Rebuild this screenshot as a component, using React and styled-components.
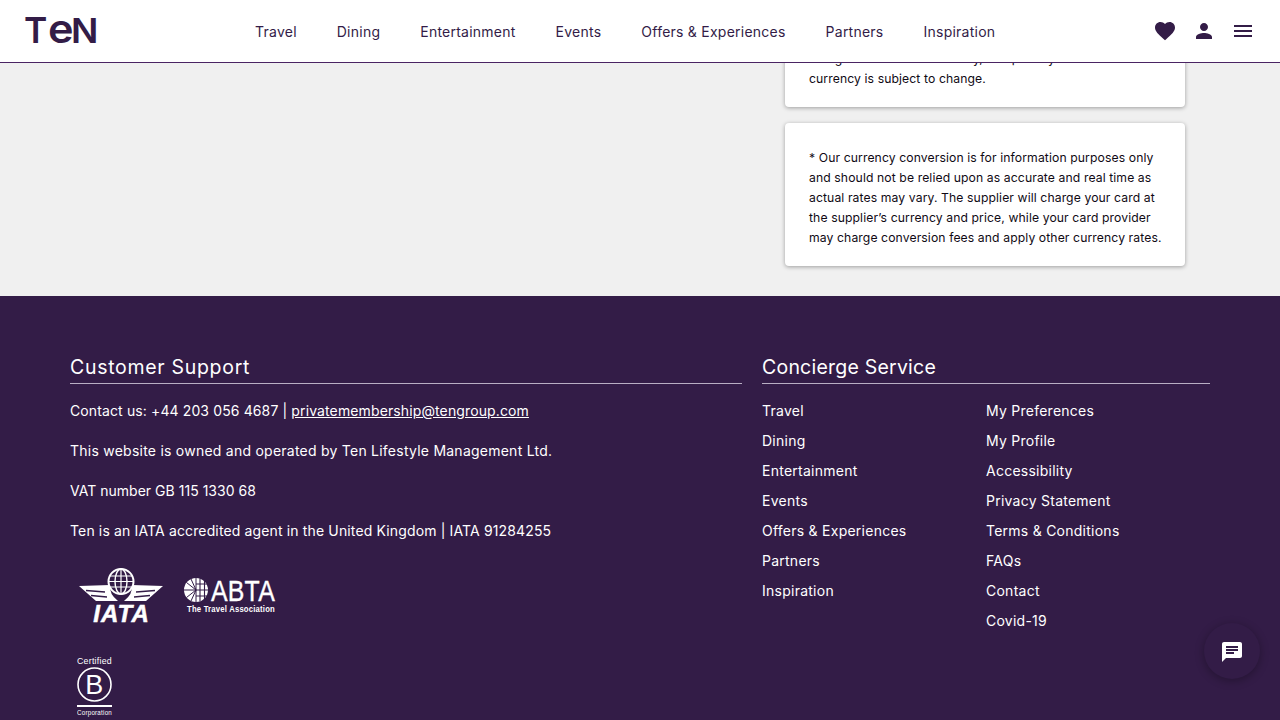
import React from 'react';
import styled, { createGlobalStyle } from 'styled-components';

const purple = '#331c47';

const GlobalStyle = createGlobalStyle`
  html, body {
    margin: 0;
    padding: 0;
    height: 720px;
    overflow: hidden;
    background: #f0f0f0;
    font-family: Inter, "Open Sans", sans-serif;
  }
`;

const Header = styled.header`
  position: fixed;
  top: 0;
  left: 0;
  right: 0;
  z-index: 2;
  height: 62px;
  display: flex;
  align-items: center;
  padding: 0 25px;
  background: #fff;
  border-bottom: 1px solid #4a2463;
`;

const Logo = styled.div`
  width: 230px;
  height: 34px;
  margin-top: -5px;
  margin-left: -1px;
  display: flex;
  align-items: baseline;
  color: ${purple};
  font-weight: 600;
  line-height: 34px;
`;

const LogoLetter = styled.span`
  display: inline-block;
  font-size: ${(p) => p.$size}px;
  margin-left: ${(p) => p.$left || 0}px;
  transform: scaleX(${(p) => p.$stretch || 1});
  transform-origin: left;
`;

const Nav = styled.nav`
  display: flex;
  gap: 40px;
  flex: 1;
  padding-top: 1px;
  margin-left: 1px;
`;

const NavLink = styled.a`
  color: ${purple};
  font-size: 14px;
  line-height: 20px;
  letter-spacing: 0.24px;
  white-space: nowrap;
`;

const IconBar = styled.div`
  display: flex;
  gap: 15px;
  margin-top: -1px;
`;

const Icon = styled.svg`
  display: block;
  width: 24px;
  height: 24px;
  fill: ${(p) => p.$color || purple};
`;

const Main = styled.main`
  height: 296px;
  box-sizing: border-box;
  display: flex;
  flex-direction: column;
  align-items: flex-end;
  gap: 16px;
  padding-right: 95px;
  overflow: hidden;
`;

const Card = styled.div`
  width: 400px;
  box-sizing: border-box;
  padding: ${(p) => p.$top}px 24px ${(p) => p.$bottom}px;
  background: #fff;
  border-radius: 4px;
  box-shadow: 0 1px 4px rgba(0, 0, 0, 0.35);
  color: #100a14;
  font-size: 12.2px;
  line-height: 20px;
  letter-spacing: 0.1px;
  white-space: nowrap;
`;

const Footer = styled.footer`
  display: grid;
  grid-template-columns: 672px 448px;
  column-gap: 20px;
  padding: 59px 70px 0;
  height: 424px;
  box-sizing: border-box;
  background: ${purple};
  color: #fff;
  font-size: 14px;
  line-height: 20px;
  letter-spacing: 0.25px;
`;

const Heading = styled.h2`
  margin: 0 0 17px;
  padding-bottom: 4px;
  border-bottom: 1px solid #b9aec4;
  font-size: 19.5px;
  font-weight: 400;
  line-height: 24px;
  letter-spacing: ${(p) => p.$spacing}px;
`;

const Para = styled.p`
  margin: 0 0 20px;
  white-space: nowrap;
  letter-spacing: ${(p) => p.$spacing}px;
`;

const Mail = styled.a`
  color: #fff;
  text-decoration: underline;
`;

const LogoRow = styled.div`
  display: flex;
  align-items: flex-start;
  gap: 20px;
  margin: 27px 0 29px 9px;
`;

const LinkColumns = styled.div`
  display: grid;
  grid-template-columns: 224px 224px;
`;

const LinkList = styled.ul`
  list-style: none;
  margin: 0;
  padding: 0;
`;

const LinkItem = styled.li`
  height: 30px;
  line-height: 20px;
`;

const ChatButton = styled.button`
  position: fixed;
  right: 20px;
  top: 623px;
  width: 56px;
  height: 56px;
  padding: 2px 0 0;
  border: 0;
  border-radius: 50%;
  display: flex;
  align-items: center;
  justify-content: center;
  background: ${purple};
  box-shadow: 0 2px 10px rgba(0, 0, 0, 0.3);
`;

const LogoSvg = styled.svg`
  display: block;
  flex: none;
  margin-left: ${(p) => p.$left || 0}px;
  margin-top: ${(p) => p.$top || 0}px;
`;

const Iata = () => (
  <LogoSvg width="85" height="60" viewBox="0 0 85 60" fill="#fff">
    <circle cx="42" cy="13.5" r="12.5" fill="none" stroke="#fff" strokeWidth="2" />
    <ellipse cx="42" cy="13.5" rx="6" ry="12.5" fill="none" stroke="#fff" strokeWidth="1.4" />
    <path d="M42 1v25M31 8h22M29.5 13.5h25M31 19h22" stroke="#fff" strokeWidth="1.2" />
    <path d="M0 18 31 17q-1 9 8 16H17z" />
    <path d="M84 18 53 17q1 9-8 16h22z" />
    <path d="M7 22.5l19 1.5M12 27.5l16 1.5M76 22.5 57 24M71 27.5 55 29" stroke={purple} strokeWidth="1.3" />
    <text x="42.5" y="54" textAnchor="middle" fontFamily="Liberation Sans" fontSize="24" fontWeight="700" fontStyle="italic" letterSpacing="1" stroke="#fff" strokeWidth="0.5">IATA</text>
  </LogoSvg>
);

const Abta = () => (
  <LogoSvg $top={5} width="112" height="44" viewBox="0 -4 112 44" fill="#fff">
    <circle cx="12" cy="13" r="12" />
    <path d="M12 1v24M0 13h12M2.500 5.500l9.500 7.500M2.500 20.500l9.500-7.500M7 2l5 11M7 24l5-11" stroke={purple} strokeWidth="1" />
    <path d="M12 7h12M12 13h12M12 19h12M16 1.500v23M20.500 3v20" stroke={purple} strokeWidth="1.1" />
    <text x="27" y="24" fontFamily="Liberation Sans" fontSize="29" textLength="64" lengthAdjust="spacingAndGlyphs" stroke="#fff" strokeWidth="0.35">ABTA</text>
    <text x="3" y="35" fontFamily="Liberation Sans" fontSize="9.5" fontWeight="700" textLength="88" lengthAdjust="spacingAndGlyphs">The Travel Association</text>
  </LogoSvg>
);

const BCorp = () => (
  <LogoSvg $left={7} width="36" height="60" viewBox="0 0 36 60" fill="#fff">
    <text x="0" y="7" fontFamily="Liberation Sans" fontSize="8.5" textLength="35" lengthAdjust="spacingAndGlyphs">Certified</text>
    <circle cx="17.500" cy="27.500" r="16.500" fill="none" stroke="#fff" strokeWidth="1.6" />
    <text x="17.500" y="37" textAnchor="middle" fontFamily="Liberation Sans" fontSize="27">B</text>
    <rect x="0" y="48" width="35" height="2" />
    <text x="0" y="58" fontFamily="Liberation Sans" fontSize="6.500" textLength="35" lengthAdjust="spacingAndGlyphs">Corporation</text>
  </LogoSvg>
);

const navItems = ['Travel', 'Dining', 'Entertainment', 'Events', 'Offers & Experiences', 'Partners', 'Inspiration'];
const secondary = ['My Preferences', 'My Profile', 'Accessibility', 'Privacy Statement', 'Terms & Conditions', 'FAQs', 'Contact', 'Covid-19'];

const App = () => (
  <>
    <GlobalStyle />
    <Header>
      <Logo>
        <LogoLetter $size={36} $stretch={0.98}>T</LogoLetter>
        <LogoLetter $size={40} $stretch={1.08}>e</LogoLetter>
        <LogoLetter $size={34} $stretch={1.06}>N</LogoLetter>
      </Logo>
      <Nav>
        {navItems.map((item) => (
          <NavLink key={item}>{item}</NavLink>
        ))}
      </Nav>
      <IconBar>
        <Icon viewBox="0 0 24 24">
          <path d="M12 21.35l-1.45-1.32C5.4 15.36 2 12.28 2 8.5 2 5.42 4.42 3 7.5 3c1.74 0 3.41.81 4.5 2.09C13.09 3.81 14.76 3 16.5 3 19.58 3 22 5.42 22 8.5c0 3.78-3.4 6.86-8.55 11.54L12 21.35z" />
        </Icon>
        <Icon viewBox="0 0 24 24">
          <path d="M12 12c2.21 0 4-1.79 4-4s-1.79-4-4-4-4 1.79-4 4 1.79 4 4 4zm0 2c-2.67 0-8 1.34-8 4v2h16v-2c0-2.66-5.33-4-8-4z" />
        </Icon>
        <Icon viewBox="0 0 24 24">
          <path d="M3 18h18v-2H3v2zm0-5h18v-2H3v2zm0-7v2h18V6H3z" />
        </Icon>
      </IconBar>
    </Header>
    <Main>
      <Card $top={49} $bottom={18}>
        charged in the local currency, and paid by the card. This
        <br />
        currency is subject to change.
      </Card>
      <Card $top={25} $bottom={18}>
        * Our currency conversion is for information purposes only
        <br />
        and should not be relied upon as accurate and real time as
        <br />
        actual rates may vary. The supplier will charge your card at
        <br />
        the supplier’s currency and price, while your card provider
        <br />
        may charge conversion fees and apply other currency rates.
      </Card>
    </Main>
    <Footer>
      <section>
        <Heading $spacing={0.7}>Customer Support</Heading>
        <Para $spacing={0.12}>
          Contact us: +44 203 056 4687 | <Mail>privatemembership@tengroup.com</Mail>
        </Para>
        <Para $spacing={0.24}>This website is owned and operated by Ten Lifestyle Management Ltd.</Para>
        <Para $spacing={0.02}>VAT number GB 115 1330 68</Para>
        <Para $spacing={0.14}>Ten is an IATA accredited agent in the United Kingdom | IATA 91284255</Para>
        <LogoRow>
          <Iata />
          <Abta />
        </LogoRow>
        <BCorp />
      </section>
      <section>
        <Heading $spacing={0.22}>Concierge Service</Heading>
        <LinkColumns>
          <LinkList>
            {navItems.map((item) => (
              <LinkItem key={item}>{item}</LinkItem>
            ))}
          </LinkList>
          <LinkList>
            {secondary.map((item) => (
              <LinkItem key={item}>{item}</LinkItem>
            ))}
          </LinkList>
        </LinkColumns>
      </section>
    </Footer>
    <ChatButton aria-label="Chat">
      <Icon viewBox="0 0 24 24" $color="#fff">
        <path d="M20 2H4c-1.1 0-1.99.9-1.99 2L2 22l4-4h14c1.1 0 2-.9 2-2V4c0-1.1-.9-2-2-2zM6 9h12v2H6V9zm8 5H6v-2h8v2zm4-6H6V6h12v2z" />
      </Icon>
    </ChatButton>
  </>
);

export default App;
